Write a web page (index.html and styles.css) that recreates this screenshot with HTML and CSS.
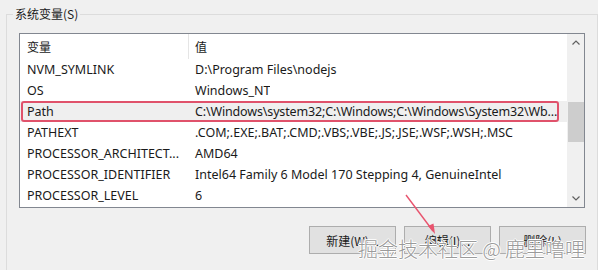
FILE: index.html
```html
<!DOCTYPE html>
<html lang="zh-CN">

<head>
    <meta charset="UTF-8">
    <meta name="viewport" content="width=device-width, initial-scale=1.0">
    <title>系统变量</title>
    <link rel="stylesheet" href="styles.css">
</head>

<body>
    <fieldset class="group">
        <legend>系统变量(S)</legend>

        <div class="list">
            <div class="list-body">
                <div class="row head">
                    <span class="col-name">变量</span>
                    <span class="col-value">值</span>
                </div>
                <div class="row">
                    <span class="col-name">NVM_SYMLINK</span>
                    <span class="col-value">D:\Program Files\nodejs</span>
                </div>
                <div class="row">
                    <span class="col-name">OS</span>
                    <span class="col-value">Windows_NT</span>
                </div>
                <div class="row selected">
                    <span class="col-name">Path</span>
                    <span class="col-value">C:\Windows\system32;C:\Windows;C:\Windows\System32\Wb...</span>
                </div>
                <div class="row">
                    <span class="col-name">PATHEXT</span>
                    <span class="col-value">.COM;.EXE;.BAT;.CMD;.VBS;.VBE;.JS;.JSE;.WSF;.WSH;.MSC</span>
                </div>
                <div class="row">
                    <span class="col-name">PROCESSOR_ARCHITECT...</span>
                    <span class="col-value">AMD64</span>
                </div>
                <div class="row">
                    <span class="col-name">PROCESSOR_IDENTIFIER</span>
                    <span class="col-value">Intel64 Family 6 Model 170 Stepping 4, GenuineIntel</span>
                </div>
                <div class="row">
                    <span class="col-name">PROCESSOR_LEVEL</span>
                    <span class="col-value">6</span>
                </div>
            </div>

            <div class="scrollbar">
                <span class="arrow">
                    <svg width="8" height="5" viewBox="0 0 8 5"><path d="M0.5 4.5 L4 1 L7.5 4.5" fill="none" stroke="#606060" stroke-width="1.2"/></svg>
                </span>
                <div class="track">
                    <div class="thumb"></div>
                </div>
                <span class="arrow">
                    <svg width="8" height="5" viewBox="0 0 8 5"><path d="M0.5 0.5 L4 4 L7.5 0.5" fill="none" stroke="#606060" stroke-width="1.2"/></svg>
                </span>
            </div>
        </div>

        <div class="buttons">
            <button class="btn">新建(W)...</button>
            <button class="btn">编辑(I)...</button>
            <button class="btn">删除(L)</button>
        </div>
    </fieldset>

    <!-- annotation arrow pointing at the edit button -->
    <svg class="pointer" width="40" height="46" viewBox="0 0 40 46">
        <path d="M2 2 L29 38" stroke="#e8546e" stroke-width="1.4" fill="none"/>
        <path d="M24 33 L31 41 L29.5 30.5 Z" fill="#e8546e"/>
    </svg>

    <div class="watermark">掘金技术社区 @ 鹿里噜哩</div>
</body>

</html>
```

FILE: styles.css
```css
body {
    margin: 0;
    width: 598px;
    height: 270px;
    overflow: hidden;
    position: relative;
    background-color: #f0f0f0;
    font-family: "Noto Sans", "Noto Sans CJK SC", sans-serif;
    font-size: 12.5px;
    color: #1a1a1a;
}

.group {
    box-sizing: border-box;
    width: 592px;
    height: 264px;
    margin: 6px 0 0 6px;
    padding: 0 12px;
    border: 1px solid #dcdcdc;
    border-bottom: none;
    min-width: 0;
}

.group legend {
    margin-left: -6px;
    padding: 0 2px;
    line-height: 16px;
    font-family: "Noto Sans CJK SC", sans-serif;
    font-size: 12px;
}

.list {
    box-sizing: border-box;
    width: 566px;
    height: 175px;
    margin-top: 11px;
    border: 1px solid #828790;
    background-color: white;
    display: flex;
}

.list-body {
    flex: 1;
    min-width: 0;
}

.row {
    height: 21px;
    display: flex;
    align-items: center;
    white-space: nowrap;
    position: relative;
}

.row.head {
    height: 25px;
    align-items: flex-start;
    font-family: "Noto Sans CJK SC", sans-serif;
    font-size: 12px;
}

.row.head .col-name,
.row.head .col-value {
    height: 25px;
    line-height: 25px;
}

.row.head .col-name {
    border-right: 1px solid #e5e5e5;
}

.col-name {
    box-sizing: border-box;
    width: 169px;
    flex-shrink: 0;
    padding-left: 7px;
    overflow: hidden;
}

.col-value {
    padding-left: 6px;
    overflow: hidden;
}

.row.selected {
    background-color: #efefef;
}

.row.selected .col-value {
    letter-spacing: -0.15px;
}

/* red highlight drawn over the selected row */
.row.selected::after {
    content: "";
    position: absolute;
    top: 0;
    bottom: 0;
    left: 1px;
    right: 8px;
    border: 2px solid #e0526b;
    border-radius: 3px;
}

.scrollbar {
    width: 17px;
    background-color: #f0f0f0;
    display: flex;
    flex-direction: column;
}

.arrow {
    height: 17px;
    display: flex;
    align-items: center;
    justify-content: center;
}

.track {
    flex: 1;
    padding: 51px 0 0 1px;
}

.thumb {
    height: 40px;
    background-color: #cdcdcd;
}

.buttons {
    display: flex;
    justify-content: flex-end;
    gap: 8px;
    margin: 18px -1px 0 0;
}

.btn {
    box-sizing: border-box;
    width: 87px;
    height: 28px;
    padding: 0;
    border: 1px solid #adadad;
    background-color: #e1e1e1;
    font-family: "Noto Sans CJK SC", sans-serif;
    font-size: 12px;
    color: #1a1a1a;
}

.pointer {
    position: absolute;
    left: 404px;
    top: 193px;
}

.watermark {
    position: absolute;
    left: 358px;
    top: 234px;
    font-family: "Noto Sans CJK SC", sans-serif;
    font-size: 20px;
    font-weight: 300;
    color: #9b9b9b;
    white-space: nowrap;
    text-shadow: 1px 0 0 white, -1px 0 0 white, 0 1px 0 white, 0 -1px 0 white;
}
```
